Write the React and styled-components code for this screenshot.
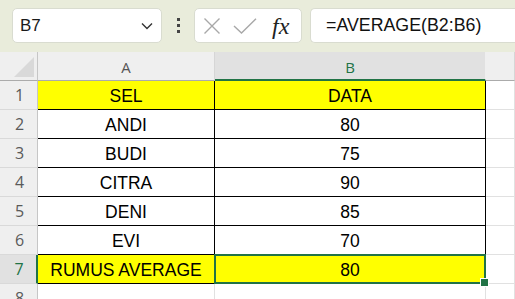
import React from 'react';
import styled, { createGlobalStyle } from 'styled-components';

const GlobalStyle = createGlobalStyle`
  html, body {
    margin: 0;
    padding: 0;
    background: #ffffff;
    overflow: hidden;
  }
  * {
    box-sizing: border-box;
  }
`;

const GREEN = '#217346';

// === Toolbar ===

const Toolbar = styled.div`
  height: 52px;
  background: #e9ecdb;
  display: flex;
  align-items: center;
  padding: 0 0 1px 12px;
  overflow: hidden;
`;

const Box = styled.div`
  height: 35px;
  background: #ffffff;
  border: 1px solid #d9dcd0;
  border-radius: 5px;
  display: flex;
  align-items: center;
  flex-shrink: 0;
`;

const NameBox = styled(Box)`
  width: 150px;
  padding: 0 8px 0 7px;
  justify-content: space-between;
  font-family: "Liberation Sans", Arial, sans-serif;
  font-size: 17px;
  color: #1a1a1a;
`;

const Dots = styled.div`
  width: 32px;
  flex-shrink: 0;
  display: flex;
  flex-direction: column;
  align-items: center;
  gap: 3px;

  span {
    width: 3px;
    height: 3px;
    background: #444;
  }
`;

const ActionBox = styled(Box)`
  width: 108px;
  padding: 0 6px 0 8px;
  gap: 12px;
`;

const FxLabel = styled.span`
  font-family: "Liberation Serif", "Times New Roman", serif;
  font-style: italic;
  font-size: 24px;
  color: #222;
  margin-left: 3px;
  line-height: 1;
`;

const FormulaBox = styled(Box)`
  margin-left: 8px;
  width: 260px;
  border-right: none;
  border-radius: 5px 0 0 5px;
  padding-left: 15px;
  font-family: "Liberation Sans", Arial, sans-serif;
  font-size: 17.8px;
  color: #111;
`;

// === Sheet ===

const Sheet = styled.div`
  display: grid;
  grid-template-columns: 38px 177px 271px 1fr;
  grid-auto-rows: 29px;
  font-family: "Liberation Sans", Arial, sans-serif;
`;

const Corner = styled.div`
  background: #efefef;
  border-right: 1px solid #c6c6c6;
  border-bottom: 1px solid #ababab;
  position: relative;

  &::after {
    content: '';
    position: absolute;
    right: 3px;
    bottom: 3px;
    width: 0;
    height: 0;
    border-left: 20px solid transparent;
    border-bottom: 20px solid #d9d9d9;
  }
`;

const ColHeader = styled.div`
  background: ${p => (p.$active ? '#e1e1e1' : '#efefef')};
  color: ${p => (p.$active ? GREEN : '#555')};
  border-right: 1px solid ${p => (p.$active ? '#efefef' : '#d6d6d6')};
  border-bottom: ${p => (p.$active ? `2px solid ${GREEN}` : '1px solid #ababab')};
  font-family: "Open Sans", "Noto Sans", sans-serif;
  font-size: 15px;
  display: flex;
  align-items: center;
  justify-content: center;
  padding-top: ${p => (p.$active ? '2px' : '1px')};
`;

const RowHeader = styled.div`
  background: ${p => (p.$active ? '#e1e1e1' : '#efefef')};
  color: ${p => (p.$active ? GREEN : '#5a5a5a')};
  border-right: ${p => (p.$active ? `2px solid ${GREEN}` : '1px solid #c6c6c6')};
  border-bottom: 1px solid #d9d9d9;
  font-family: "Open Sans", "Noto Sans", sans-serif;
  font-size: 16px;
  display: flex;
  align-items: center;
  justify-content: center;
  padding-left: 2px;
`;

const Cell = styled.div`
  position: relative;
  background: ${p => (p.$fill ? '#ffff00' : '#ffffff')};
  border-right: 1px solid ${p => (p.$plain ? '#e1e1e1' : '#000')};
  border-bottom: 1px solid ${p => (p.$plain ? '#e1e1e1' : '#000')};
  display: flex;
  align-items: center;
  justify-content: center;
  font-size: 17.5px;
  color: #000;
  padding-top: 2px;
`;

const SelectedCell = styled(Cell)`
  &::before {
    content: '';
    position: absolute;
    left: -1px;
    top: -1px;
    right: -1px;
    bottom: -1px;
    border: 2px solid ${GREEN};
  }

  &::after {
    content: '';
    position: absolute;
    right: -4px;
    bottom: -4px;
    width: 7px;
    height: 7px;
    background: ${GREEN};
    border: 1px solid #fff;
    z-index: 2;
  }
`;

const rows = [
  ['SEL', 'DATA'],
  ['ANDI', '80'],
  ['BUDI', '75'],
  ['CITRA', '90'],
  ['DENI', '85'],
  ['EVI', '70'],
  ['RUMUS AVERAGE', '80'],
];

const Chevron = () => (
  <svg width="12" height="8" viewBox="0 0 12 8">
    <path d="M1 1.5 L6 6.5 L11 1.5" fill="none" stroke="#333" strokeWidth="1.4" />
  </svg>
);

const CancelIcon = () => (
  <svg width="18" height="16" viewBox="0 0 18 16">
    <path d="M1.5 0.5 L16.5 15.5 M16.5 0.5 L1.5 15.5" stroke="#a8a8a8" strokeWidth="1.4" fill="none" />
  </svg>
);

const EnterIcon = () => (
  <svg width="24" height="16" viewBox="0 0 24 16">
    <path d="M1 8 L8.5 15 L23 0.8" stroke="#a8a8a8" strokeWidth="1.4" fill="none" />
  </svg>
);

const App = () => {
  return (
    <>
      <GlobalStyle />
      <Toolbar>
        <NameBox>
          <span>B7</span>
          <Chevron />
        </NameBox>
        <Dots>
          <span />
          <span />
          <span />
        </Dots>
        <ActionBox>
          <CancelIcon />
          <EnterIcon />
          <FxLabel>fx</FxLabel>
        </ActionBox>
        <FormulaBox>=AVERAGE(B2:B6)</FormulaBox>
      </Toolbar>

      <Sheet>
        <Corner />
        <ColHeader>A</ColHeader>
        <ColHeader $active>B</ColHeader>
        <ColHeader />

        {rows.map(([a, b], i) => {
          const n = i + 1;
          const isFill = n === 1 || n === 7;
          const isSel = n === 7;
          const BCell = isSel ? SelectedCell : Cell;
          return (
            <React.Fragment key={n}>
              <RowHeader $active={isSel}>{n}</RowHeader>
              <Cell $fill={isFill}>{a}</Cell>
              <BCell $fill={isFill}>{b}</BCell>
              <Cell $plain />
            </React.Fragment>
          );
        })}

        <RowHeader>8</RowHeader>
        <Cell $plain />
        <Cell $plain />
        <Cell $plain />
      </Sheet>
    </>
  );
};

export default App;
